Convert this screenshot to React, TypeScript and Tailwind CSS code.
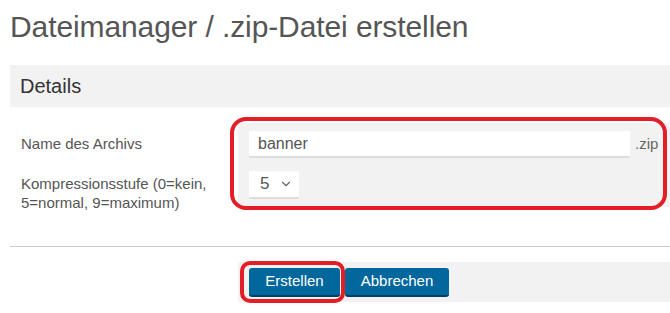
import { ChevronDown } from "lucide-react";

export default function App() {
  return (
    <div className="relative w-[670px] h-[313px] overflow-hidden bg-white font-['Liberation_Sans',Arial,sans-serif]">
      <h1 className="h-[65px] pl-[10px] pt-[9px] text-[30px] leading-[36px] tracking-[-0.1px] text-[#555] font-normal">
        Dateimanager / .zip-Datei erstellen
      </h1>

      <section className="ml-[10px]">
        <div className="h-[42px] flex items-center pl-[10px] bg-[#f2f2f2] text-[20px] text-[#333]">
          Details
        </div>

        <div className="mt-[16px] grid grid-cols-[228px_1fr]">
          <div className="flex flex-col pt-[8px] pl-[11px] text-[15px] text-[#555]">
            <div className="h-[27px] flex items-center">Name des Archivs</div>
            <div className="mt-[13px] h-[28px] leading-[19px] pt-[3px]">
              Kompressionsstufe (0=kein,
              <br />
              5=normal, 9=maximum)
            </div>
          </div>
          <div className="bg-[#f2f2f2] pt-[8px] pb-[8px] pl-[11px] flex flex-col gap-[13px]">
            <div className="flex items-center gap-[5px]">
              <div className="w-[381px] h-[27px] bg-white border-b-2 border-[#ddd] rounded-[2px] flex items-center pl-[9px] text-[16px] text-[#555]">
                banner
              </div>
              <span className="text-[15px] text-[#666]">.zip</span>
            </div>
            <div className="w-[50px] h-[28px] bg-white border-b-2 border-[#ddd] rounded-[2px] flex items-center justify-between pl-[11px] pr-[6px] text-[17px] text-[#555]">
              <span>5</span>
              <ChevronDown size={14} strokeWidth={2} className="text-[#666]" />
            </div>
          </div>
        </div>

        <div className="mt-[39px] h-px bg-[#ccc]" />

        <div className="mt-[15px] grid grid-cols-[228px_1fr]">
          <div />
          <div className="h-[40px] bg-[#f2f2f2] flex items-center gap-[5px] pl-[11px]">
            <button className="h-[29px] w-[91px] rounded-[3px] bg-[#02679d] border-b-2 border-[#003e63] text-white text-[15px]">
              Erstellen
            </button>
            <button className="h-[29px] w-[104px] rounded-[3px] bg-[#02679d] border-b-2 border-[#003e63] text-white text-[15px]">
              Abbrechen
            </button>
          </div>
        </div>
      </section>

      {/* red annotation marks */}
      <div className="absolute left-[230px] top-[117px] w-[437px] h-[93px] border-[4px] border-[#e41e26] rounded-[16px]" />
      <div className="absolute left-[240px] top-[261px] w-[105px] h-[42px] border-[4px] border-[#e41e26] rounded-[10px]" />
    </div>
  );
}
